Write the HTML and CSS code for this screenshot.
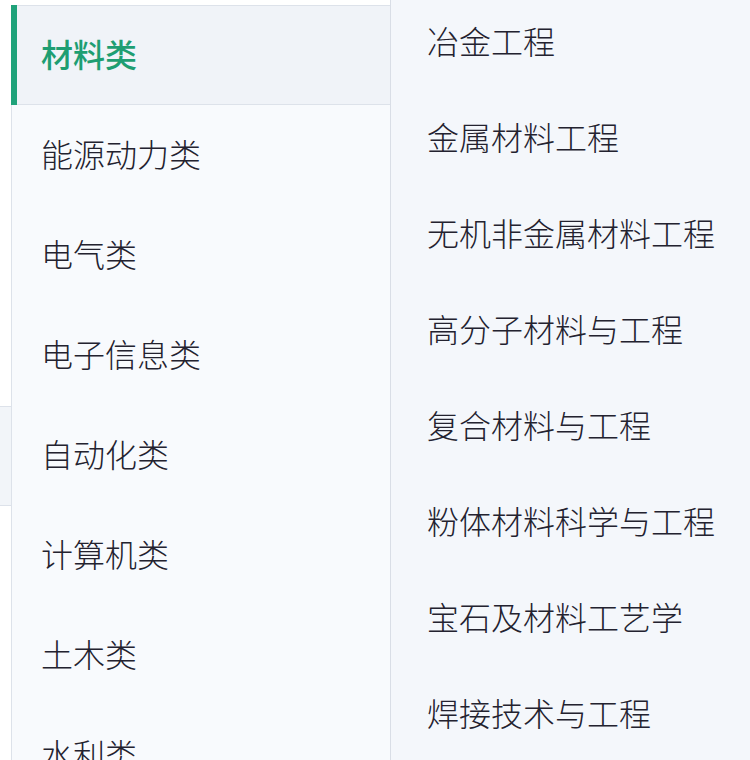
FILE: index.html
```html
<!DOCTYPE html>
<html>
<head>
    <meta charset="utf-8">
    <title>专业分类</title>
    <link rel="stylesheet" href="styles.css">
</head>
<body>
    <div class="page">
        <div class="edge">
            <div class="edge-block"></div>
        </div>
        <ul class="category-list">
            <li class="category active">材料类</li>
            <li class="category">能源动力类</li>
            <li class="category">电气类</li>
            <li class="category">电子信息类</li>
            <li class="category">自动化类</li>
            <li class="category">计算机类</li>
            <li class="category">土木类</li>
            <li class="category">水利类</li>
        </ul>
        <ul class="major-list">
            <li class="major">冶金工程</li>
            <li class="major">金属材料工程</li>
            <li class="major">无机非金属材料工程</li>
            <li class="major">高分子材料与工程</li>
            <li class="major">复合材料与工程</li>
            <li class="major">粉体材料科学与工程</li>
            <li class="major">宝石及材料工艺学</li>
            <li class="major">焊接技术与工程</li>
        </ul>
    </div>
</body>
</html>
```

FILE: styles.css
```css
html, body {
    margin: 0;
    padding: 0;
    height: 100%;
    overflow: hidden;
    background-color: #fff;
    font-family: "Noto Sans CJK SC", "Noto Sans", sans-serif;
    color: #23222f;
}

ul {
    list-style-type: none;
    margin: 0;
    padding: 0;
}

.page {
    display: flex;
    height: 760px;
    overflow: hidden;
}

.edge {
    width: 11px;
    flex-shrink: 0;
}

.edge-block {
    margin-top: 406px;
    height: 98px;
    background-color: #f2f5f9;
    border-top: 1px solid #dde2ea;
    border-bottom: 1px solid #dde2ea;
}

.category-list {
    width: 378px;
    flex-shrink: 0;
    margin-top: 5px;
    border-left: 1px solid #dde2ea;
    background-color: #f8fafd;
}

.category {
    position: relative;
    height: 100px;
    line-height: 96px;
    padding-left: 29px;
    font-size: 32px;
    font-weight: 300;
    box-sizing: border-box;
}

.category.active {
    background-color: #f0f3f8;
    border-top: 1px solid #dde2ea;
    border-bottom: 1px solid #dde2ea;
    line-height: 94px;
    color: #1e9e72;
    font-weight: 500;
}

.category.active::before {
    content: "";
    position: absolute;
    left: -1px;
    top: -1px;
    bottom: -1px;
    width: 6px;
    background-color: #1fa27a;
}

.major-list {
    flex: 1;
    border-left: 1px solid #d9dee6;
    background-color: #f4f7fb;
}

.major {
    height: 96px;
    padding-top: 24px;
    padding-left: 36px;
    box-sizing: border-box;
    line-height: 32px;
    font-size: 32px;
    font-weight: 300;
}
```
